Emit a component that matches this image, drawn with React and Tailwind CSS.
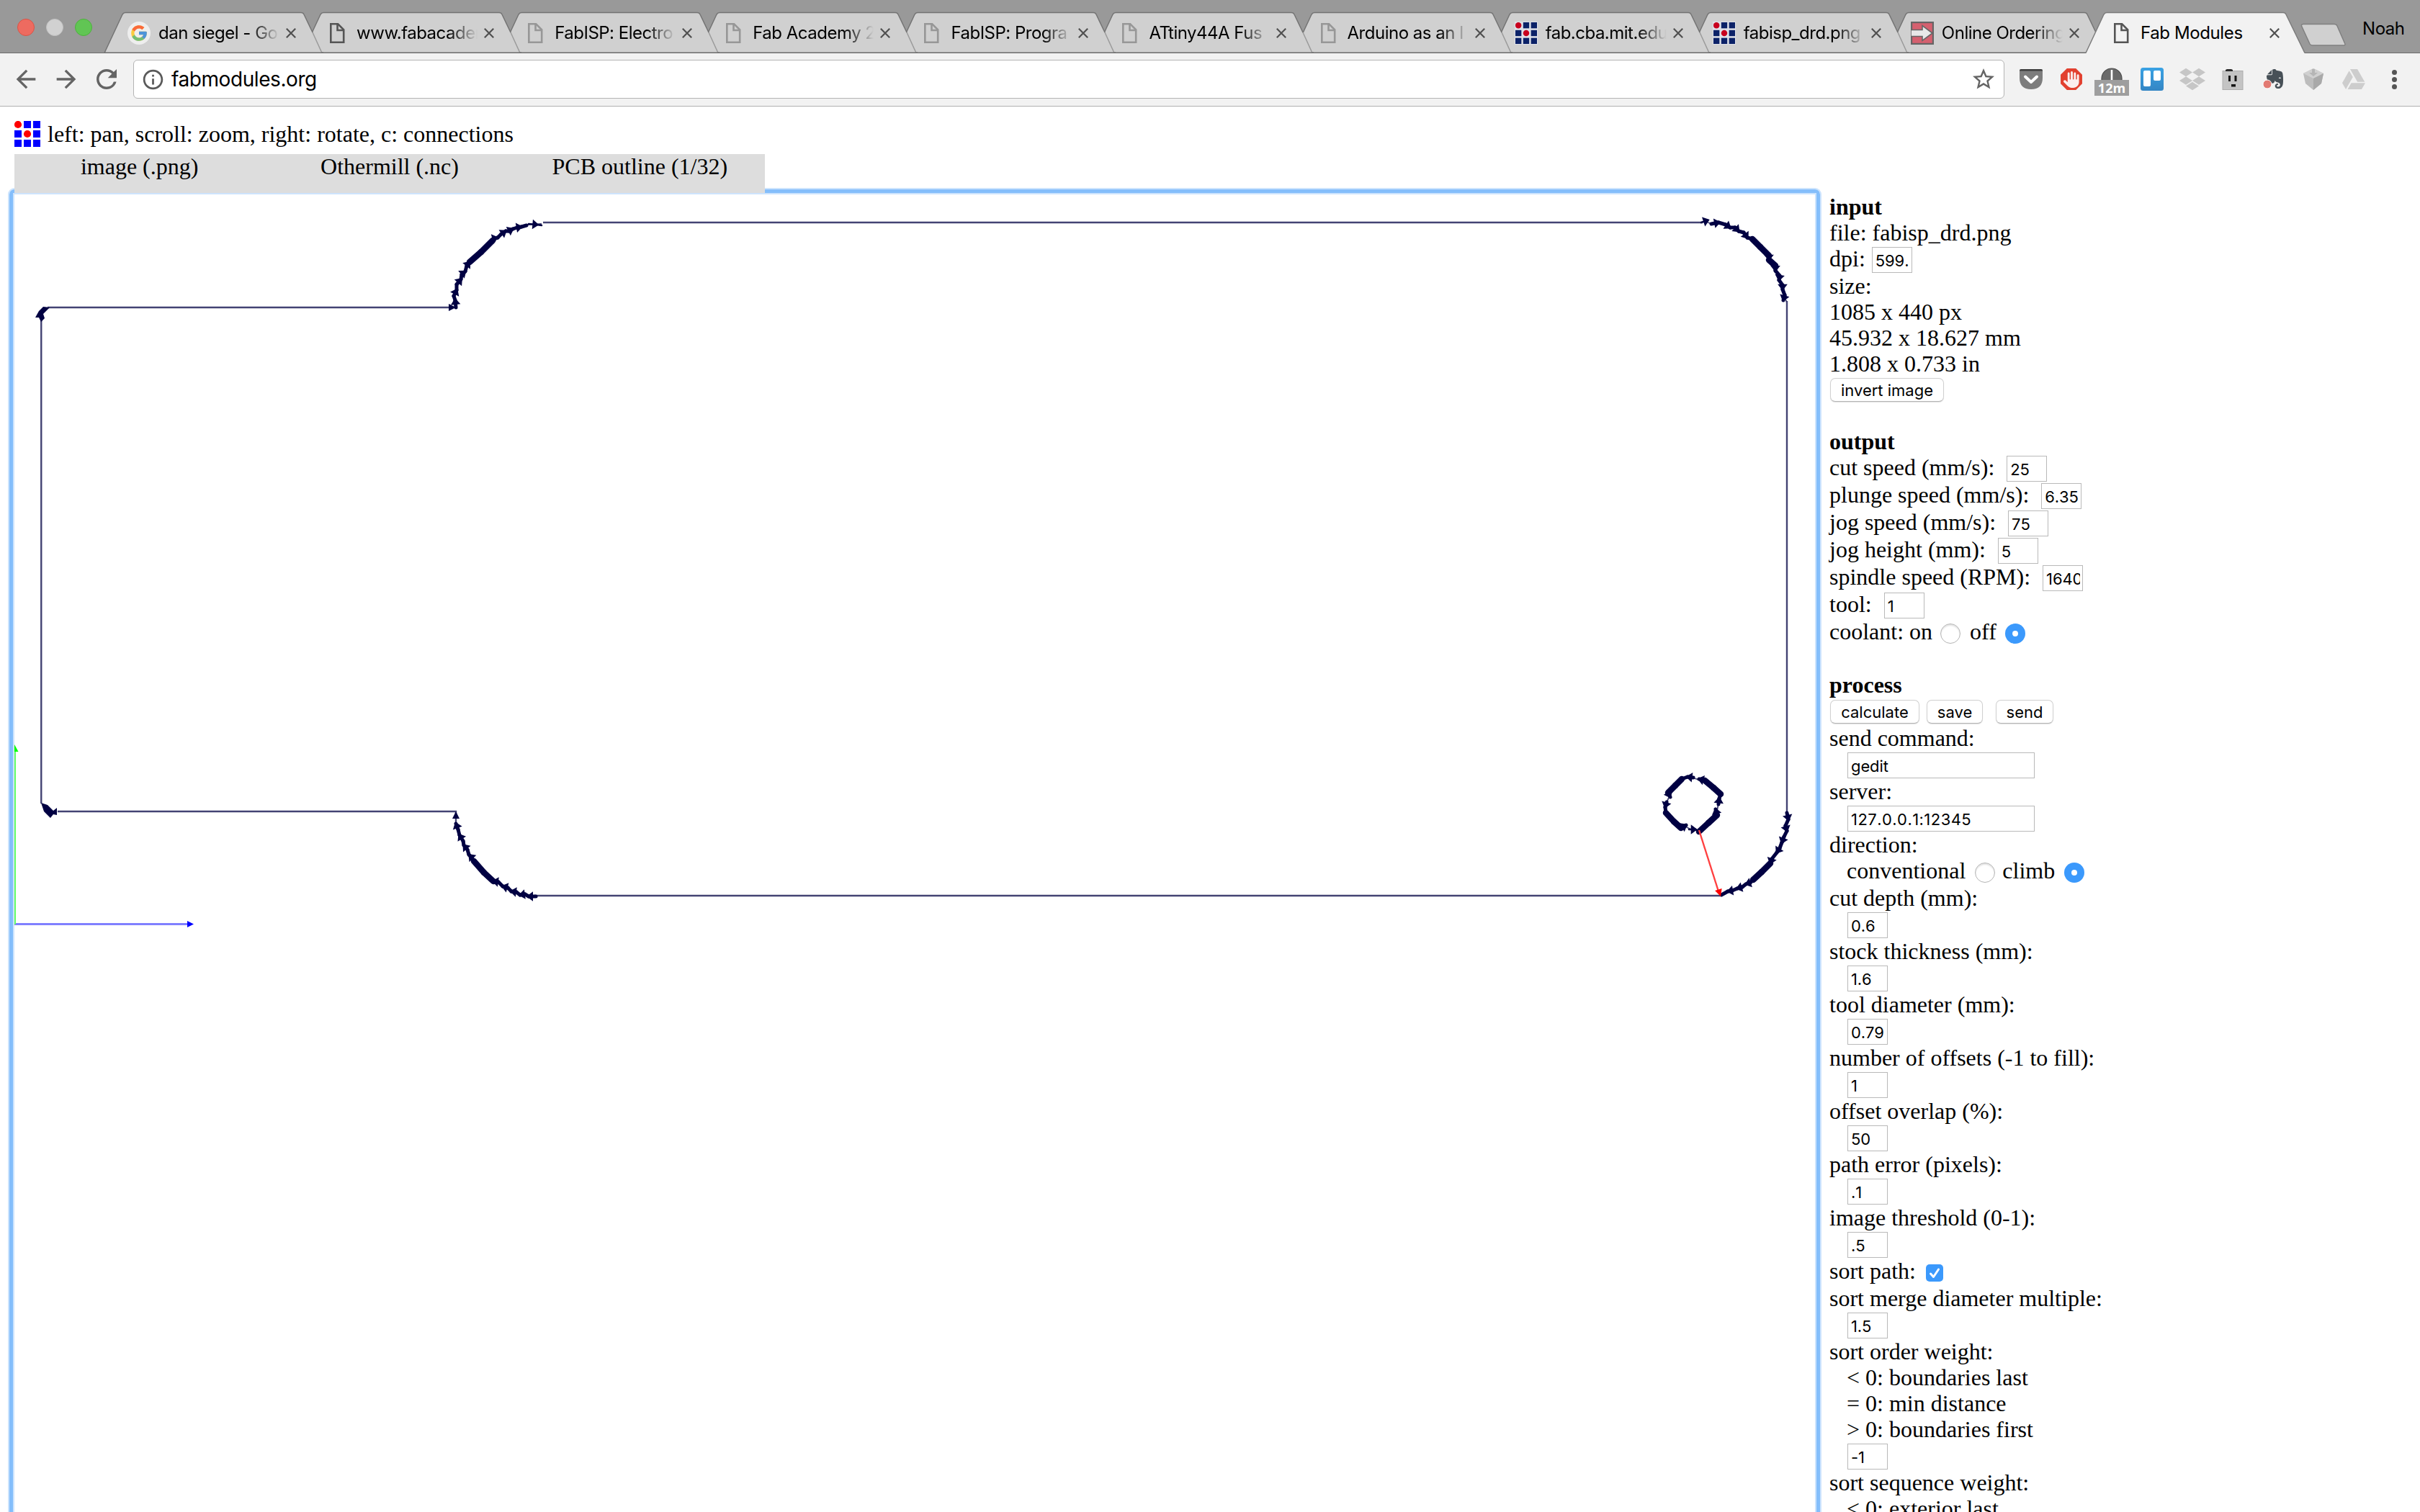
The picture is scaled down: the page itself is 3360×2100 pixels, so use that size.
import React from "react";
import { FcGoogle } from "react-icons/fc";
import { MdArrowBack, MdArrowForward, MdRefresh, MdInfoOutline, MdStarBorder } from "react-icons/md";
import { FaDropbox, FaEvernote, FaGoogleDrive, FaHand } from "react-icons/fa6";

const SANS = "font-['Inter','Liberation_Sans',sans-serif]";

/* ---------- favicons ---------- */

function DocIcon({ color }) {
  return (
    <svg className="h-8 w-8" viewBox="0 0 32 32" fill="none" stroke={color} strokeWidth="2.6">
      <path d="M7.3 3.3h9.9l8 8v17.4H7.3z" />
      <path d="M16.5 3.5v8.5h8.5" />
    </svg>
  );
}

function GridLogo({ className, blue, red }) {
  const cells = [0, 1, 2].flatMap((r) => [0, 1, 2].map((c) => [r, c]));
  return (
    <svg className={className} viewBox="0 0 36 36">
      {cells.map(([r, c]) =>
        r === c && r < 2 ? (
          <circle key={`${r}${c}`} cx={5 + c * 13} cy={5 + r * 13} r="5.1" fill={red} />
        ) : (
          <rect key={`${r}${c}`} x={c * 13} y={r * 13} width="10" height="10" fill={blue} />
        )
      )}
    </svg>
  );
}

function Favicon({ kind }) {
  if (kind === "google")
    return (
      <span className="flex h-8 w-8 items-center justify-center rounded-full bg-[#eeeeee]">
        <FcGoogle size={26} opacity="0.75" />
      </span>
    );
  if (kind === "grid")
    return (
      <span className="flex h-8 w-8 items-center justify-center bg-[#dfe1e8]">
        <GridLogo className="h-[30px] w-[30px]" blue="#0c2268" red="#c8001e" />
      </span>
    );
  if (kind === "arrow")
    return (
      <svg className="h-8 w-8" viewBox="0 0 32 32">
        <rect x="1" y="1" width="30" height="30" fill="#d5606f" stroke="#666" strokeWidth="2.4" />
        <path d="M0 11.500h16V5.500L30 16 16 26.500v-6H0z" fill="#e8e8e8" stroke="#666" strokeWidth="1.600" />
      </svg>
    );
  return <DocIcon color={kind === "dark" ? "#555555" : "#979797"} />;
}

/* ---------- tab strip ---------- */

const TABS = [
  { title: "dan siegel - Go", icon: "google", z: "z-[11]" },
  { title: "www.fabacadem", icon: "dark", z: "z-[10]" },
  { title: "FabISP: Electro", icon: "light", z: "z-[9]" },
  { title: "Fab Academy 2", icon: "light", z: "z-[8]" },
  { title: "FabISP: Progra", icon: "light", z: "z-[7]" },
  { title: "ATtiny44A Fus", icon: "light", z: "z-[6]" },
  { title: "Arduino as an I", icon: "light", z: "z-[5]" },
  { title: "fab.cba.mit.edu", icon: "grid", z: "z-[4]" },
  { title: "fabisp_drd.png", icon: "grid", z: "z-[3]" },
  { title: "Online Ordering", icon: "arrow", z: "z-[2]" },
  { title: "Fab Modules", icon: "dark", z: "z-[20]", active: true },
];

function Tab({ tab }) {
  return (
    <div className={`relative h-[74px] w-[275.1px] shrink-0 ${tab.z}`}>
      <svg className="absolute left-0 top-[17px] h-[57px] w-[304px] overflow-visible" viewBox="0 0 304 57">
        {tab.active ? (
          <>
            <path d="M0 57L25 3Q26.500 .5 29 .5H274Q277 .5 278 3L304 57z" fill="#f2f2f2" />
            <path d="M0 56.500L25 3Q26.500 .5 29 .5H274Q277 .5 278 3L304 56.500" fill="none" stroke="#7c7c7c" strokeWidth="1.5" />
          </>
        ) : (
          <>
            <path d="M0 57L25 3Q26.500 .5 29 .5H273Q276 .5 277 3L302 57z" fill="#d0d0d0" />
            <path d="M0 56.500L25 3Q26.500 .5 29 .5H273Q276 .5 277 3L289 28" fill="none" stroke="#747474" strokeWidth="1.5" />
            <path d="M289 28L302 56.500" fill="none" stroke="#9a9a9a" strokeWidth="1.5" />
            <path d="M0 56.250H304" stroke="#6c6c6c" strokeWidth="1.5" />
          </>
        )}
      </svg>
      <div className={`relative mt-[30px] flex h-8 items-center ${tab.active ? "pl-[33px]" : "pl-8"}`}>
        <Favicon kind={tab.icon} />
        <span
          className={`ml-[11px] w-[168px] overflow-hidden whitespace-nowrap text-2xl leading-8 text-black ${
            tab.active ? "tracking-[-0.38px]" : "tracking-[-0.5px] [mask-image:linear-gradient(to_right,black_76%,transparent)]"
          }`}
        >
          {tab.title}
        </span>
        <svg
          className={`h-[14px] w-[14px] shrink-0 ${tab.active ? "ml-[11px]" : "ml-[9px]"}`}
          viewBox="0 0 14 14"
          stroke="#505050"
          strokeWidth="2.2"
        >
          <path d="M.8.8l12.400 12.400M13.200.8L.8 13.200" />
        </svg>
      </div>
    </div>
  );
}

function TabStrip() {
  return (
    <div className="relative flex h-[74px] border-b border-[#6c6c6c] bg-[#999999]">
      <div className="flex w-[145px] shrink-0 items-center gap-4 pl-6 pt-[2px]">
        <span className="h-6 w-6 rounded-full border border-[#d95447] bg-[#ed6b60]" />
        <span className="h-6 w-6 rounded-full border border-[#c2c2c2] bg-[#d1d1d1]" />
        <span className="h-6 w-6 rounded-full border border-[#4db13d] bg-[#61c554]" />
      </div>
      {TABS.map((tab) => (
        <Tab key={tab.title} tab={tab} />
      ))}
      <svg className="ml-[20px] mt-8 h-8 w-[70px] shrink-0" viewBox="0 0 70 32">
        <path d="M7 1.500H50Q53 1.500 54 4L64.500 28Q66 31 63 31H20Q17 31 16 29L4.500 4Q4 1.500 7 1.500z" fill="#d0d0d0" stroke="#808080" strokeWidth="1.5" />
      </svg>
      <span className="ml-[19px] mt-[24px] text-2xl leading-8 tracking-[-0.45px] text-black">Noah</span>
    </div>
  );
}

/* ---------- toolbar ---------- */

function Toolbar() {
  return (
    <div className="flex h-[74px] items-center border-b border-[#b0b0b0] bg-[#f2f2f2]">
      <div className="flex w-[185px] shrink-0 items-center pl-4 text-[#646464]">
        <MdArrowBack size={40} />
        <MdArrowForward size={40} className="ml-4" />
        <MdRefresh size={42} className="ml-[15px]" />
      </div>
      <div className="flex h-[54px] w-[2598px] shrink-0 items-center rounded-md border border-[#b4b4b4] bg-white">
        <MdInfoOutline size={33} color="#5a5a5a" className="ml-[10px]" />
        <span className="ml-[9px] grow text-[28px] leading-9 tracking-[-0.43px] text-black">fabmodules.org</span>
        <MdStarBorder size={36} color="#646464" className="mr-[10px]" />
      </div>
      <svg className="ml-[20px] h-8 w-[34px] shrink-0" viewBox="0 0 34 32">
        <path d="M1 4Q1 2 3 2H31Q33 2 33 4V14Q33 30 17 30T1 14z" fill="#7d7d7d" />
        <path d="M1 4.500Q1 2 3 2H31Q33 2 33 4.500z" fill="#3e3e3e" />
        <path d="M9 12.500l8 7.500 8-7.500" fill="none" stroke="#fff" strokeWidth="4" strokeLinecap="round" strokeLinejoin="round" />
      </svg>
      <span className="relative ml-[23px] flex h-8 w-8 shrink-0 items-center justify-center">
        <svg className="absolute inset-0 h-full w-full" viewBox="0 0 31 31">
          <path d="M9.500 1h12l8.500 8.500v12L21.500 30h-12L1 21.500v-12z" fill="#e2402f" />
        </svg>
        <FaHand size={23} color="#fbeeee" className="relative" />
      </span>
      <span className="relative ml-4 mt-2 h-[40px] w-12 shrink-0">
        <svg className="absolute left-[9px] top-0 h-[18px] w-[30px]" viewBox="0 0 30 18">
          <path d="M1 18V15a14 14 0 0 1 28 0v3z" fill="#6a6a6a" stroke="#4c4c4c" strokeWidth="1.2" />
          <path d="M15 3v15" stroke="#fff" strokeWidth="2.6" />
        </svg>
        <span className="absolute left-0 top-[17px] h-[22px] w-12 bg-[#9e9e9e] text-center font-['Open_Sans',sans-serif] text-[18px] font-bold leading-[23px] text-white">
          12m
        </span>
      </span>
      <svg className="ml-4 h-8 w-8 shrink-0" viewBox="0 0 32 32">
        <defs>
          <linearGradient id="trello" x1="0" y1="0" x2="0" y2="1">
            <stop offset="0" stopColor="#3aa2e4" />
            <stop offset="1" stopColor="#3486c4" />
          </linearGradient>
        </defs>
        <rect width="32" height="32" rx="3.5" fill="url(#trello)" />
        <rect x="4" y="4" width="10" height="22" rx="2" fill="#fff" />
        <rect x="18" y="4" width="10" height="14" rx="2" fill="#fff" />
      </svg>
      <FaDropbox size={36} color="#c6c6c6" className="ml-[22px] shrink-0" />
      <svg className="ml-[22px] h-[30px] w-[32px] shrink-0" viewBox="0 0 32 30">
        <rect x="2" y="3.500" width="28" height="26" fill="#c4c4c4" stroke="#adadad" />
        <path d="M6 4V2l2-1h6l2 1v2z" fill="#2b2b2b" />
        <path d="M10 10h3v8h-3zM18.500 10h3v8h-3zM14 22h6v3.500h-6z" fill="#151515" />
      </svg>
      <span className="relative ml-[25px] h-8 w-8 shrink-0">
        <FaEvernote size={31} color="#475057" className="absolute left-[2px] top-0" />
        <svg className="absolute left-0 top-[16px] h-[14px] w-[14px]" viewBox="0 0 14 14">
          <circle cx="7" cy="7" r="6" fill="#e27a72" stroke="#fff" />
        </svg>
      </span>
      <svg className="ml-[24px] h-8 w-[30px] shrink-0" viewBox="0 0 30 32">
        <path d="M15 1L29 8 26 22 15 31 4 22 1 8z" fill="#bdbdbd" />
        <path d="M15 1L29 8 15 15 1 8z" fill="#d0d0d0" />
        <path d="M15 15L29 8 26 22 15 31z" fill="#a9a9a9" />
        <path d="M13 2h4v5h4l-6 5-6-5h4z" fill="#b5b5b5" />
      </svg>
      <FaGoogleDrive size={32} color="#cdcdcd" className="ml-[25px] shrink-0" />
      <div className="ml-[37px] flex flex-col gap-[3px]">
        <span className="h-[7px] w-[7px] rounded-full bg-[#555]" />
        <span className="h-[7px] w-[7px] rounded-full bg-[#555]" />
        <span className="h-[7px] w-[7px] rounded-full bg-[#555]" />
      </div>
    </div>
  );
}

/* ---------- tool path drawing ---------- */

const NAVY = "#000042";

/* Each run lists its vertices in the cutting direction. */
const RUNS = [
  // upper left arc
  [[633, 427], [632, 417], [630, 411], [634, 403], [634, 395], [640, 388], [641, 381], [646, 377], [648, 369], [652, 364], [668, 350], [684, 334], [687, 331], [691, 330], [696, 325], [702, 321], [706, 321], [712, 318], [718, 316], [724, 315], [731, 313]],
  [[734, 311], [745, 312], [752, 313]],
  // upper right arc
  [[2362, 309], [2371, 306]],
  [[2376, 311], [2386, 309], [2396, 312], [2402, 316], [2409, 316], [2414, 321], [2421, 323], [2426, 330], [2433, 332], [2444, 343], [2456, 355], [2456, 361], [2465, 369], [2465, 376], [2471, 383], [2470, 389], [2475, 396], [2475, 402], [2478, 410], [2476, 417]],
  // lower right arc
  [[2481, 1129], [2483, 1138], [2479, 1147], [2481, 1154], [2477, 1162], [2474, 1170], [2471, 1178], [2467, 1184], [2460, 1193], [2458, 1199], [2446, 1211], [2434, 1222], [2430, 1226], [2424, 1228], [2419, 1232], [2412, 1234], [2405, 1237], [2399, 1238], [2390, 1243]],
  // lower left arc
  [[744, 1245], [734, 1245], [729, 1242], [722, 1243], [717, 1239], [710, 1238], [705, 1233], [698, 1231], [692, 1225], [685, 1224], [672, 1212], [658, 1196], [654, 1190], [651, 1187], [649, 1180], [644, 1174], [643, 1168], [638, 1160], [636, 1152], [633, 1144]],
  // hole
  [[2359, 1155], [2372, 1143], [2384, 1132], [2382, 1124]],
  [[2386, 1117], [2387, 1109], [2389, 1103], [2379, 1094], [2367, 1084], [2359, 1082]],
  [[2351, 1080], [2343, 1079], [2335, 1082], [2326, 1091], [2316, 1101], [2319, 1107]],
  [[2314, 1114], [2312, 1121], [2313, 1129], [2324, 1141], [2334, 1150], [2341, 1146]],
  [[2345, 1152], [2354, 1152], [2360, 1156]],
];

const EDGES = [
  "M66 427H627",
  "M754 309H2364",
  "M2481 418V1130",
  "M2388 1244H742",
  "M633 1146V1127H80",
  "M57.250 1116V440",
];

function Arrow({ from, to, color = NAVY, size = 9, half = size / 2 }) {
  const angle = (Math.atan2(to[1] - from[1], to[0] - from[0]) * 180) / Math.PI;
  return (
    <path
      d={`M0 0L${-size} ${-half}V${half}z`}
      fill={color}
      transform={`translate(${to[0]} ${to[1]}) rotate(${angle.toFixed(1)})`}
    />
  );
}

/* Diagonal stretches are dense enough to fill in; shallower ones show single arrow heads. */
function Run({ points }) {
  return (
    <g>
      {points.slice(1).map((p, k) => {
        const q = points[k];
        const dense = Math.hypot(p[0] - q[0], p[1] - q[1]) > 11.8;
        return (
          <g key={k}>
            <path
              d={`M${q[0]} ${q[1]}L${p[0]} ${p[1]}`}
              stroke={NAVY}
              strokeWidth={dense ? 8.5 : points.length > 3 ? 5 : 2.5}
              strokeLinecap="round"
            />
            {!dense && k % 2 === 0 && (
              <Arrow from={q} to={[p[0] + (p[0] - q[0]) * 0.3, p[1] + (p[1] - q[1]) * 0.3]} size={9} half={6.8} />
            )}
          </g>
        );
      })}
    </g>
  );
}

function ToolPath() {
  return (
    <svg className="block h-[1830px] w-[2500px]" viewBox="20 270 2500 1830">
      <g fill="none" stroke="#434373" strokeWidth="2.4">
        {EDGES.map((d) => (
          <path key={d} d={d} />
        ))}
        <path d="M731 312L752 311M2371 309L2378 311M2477 412L2481 420M2384 1126L2386 1116M2359 1083L2349 1080M2318 1106L2313 1116M2340 1148L2348 1152" strokeWidth="1.8" />
      </g>
      {RUNS.map((run, i) => (
        <Run key={i} points={run} />
      ))}
      <path d="M57 1115L66 1118 74 1126 79 1122V1132L74 1131 70 1136 61 1127z" fill={NAVY} />
      <path d="M57 447L54 441 49 441 54 432 60 426 69 427 60 436 62 442z" fill={NAVY} />
      <Arrow from={[600, 427]} to={[633, 427]} size={10} />
      <Arrow from={[633, 1180]} to={[633, 1127]} size={10} />
      <path d="M2359 1153L2386 1238" stroke="#ff4040" strokeWidth="2.4" />
      <Arrow from={[2359, 1153]} to={[2389, 1245]} color="#ff0000" size={10} />
      <path d="M20 1283.500H262" stroke="#8080ff" strokeWidth="3.2" />
      <Arrow from={[20, 1283.5]} to={[269, 1283.5]} color="#0000ff" />
      <path d="M21 1284V1042" stroke="#66ff66" strokeWidth="2" />
      <path d="M20 1034l5.500 10H20z" fill="#00ff00" />
    </svg>
  );
}

/* ---------- settings column ---------- */

function Box({ value, wide }) {
  return (
    <span
      className={`mt-[2px] block h-9 shrink-0 border border-[#b9b9b9] bg-white pl-1 pr-[3px] ${SANS} text-[22px] text-black [font-kerning:none] ${
        wide ? "w-[260px]" : "w-14"
      } ${value.length > 8 ? "tracking-[0.45px]" : "tracking-[-0.1px]"}`}
    >
      <span className="block overflow-hidden whitespace-nowrap leading-[36px]">{value}</span>
    </span>
  );
}

function Button({ children, className }) {
  return (
    <span
      className={`block h-[33px] shrink-0 rounded-[7px] border border-[#d0d0d0] border-b-[#b4b4b4] bg-white text-center ${SANS} text-[22px] leading-[33px] text-black shadow-[0_1px_1px_rgba(0,0,0,0.12)] ${className}`}
    >
      {children}
    </span>
  );
}

function Radio({ on, className }) {
  return (
    <span
      className={`mt-[7px] flex h-7 w-7 shrink-0 items-center justify-center rounded-full ${
        on ? "bg-[#3b99fc]" : "border border-[#b5b5b5] bg-white shadow-[inset_0_2px_2px_rgba(0,0,0,0.12)]"
      } ${className}`}
    >
      {on && <span className="h-2 w-2 rounded-full bg-white" />}
    </span>
  );
}

function Line({ children, bold }) {
  return <div className={`h-9 whitespace-pre ${bold ? "font-bold" : ""}`}>{children}</div>;
}

function Row({ children }) {
  return <div className="flex h-[38px] whitespace-pre">{children}</div>;
}

function Field({ label, value, wide }) {
  return (
    <>
      <Line>{label}</Line>
      <div className="flex h-[38px] pl-[25px]">
        <Box value={value} wide={wide} />
      </div>
    </>
  );
}

function Settings() {
  return (
    <div className="ml-[11px] mt-2 w-[800px] text-[32px] leading-9 text-black">
      <Line bold>input</Line>
      <Line>file: fabisp_drd.png</Line>
      <Row>
        <span className="mr-[1px]">{"dpi: "}</span>
        <Box value="599." />
      </Row>
      <Line>size:</Line>
      <Line>1085 x 440 px</Line>
      <Line>45.932 x 18.627 mm</Line>
      <Line>1.808 x 0.733 in</Line>
      <div className="flex h-9 pl-[1px] pt-[2px]">
        <Button className="w-[158px]">invert image</Button>
      </div>
      <Line> </Line>

      <Line bold>output</Line>
      {[
        ["cut speed (mm/s):  ", "25"],
        ["plunge speed (mm/s):  ", "6.35"],
        ["jog speed (mm/s):  ", "75"],
        ["jog height (mm):  ", "5"],
        ["spindle speed (RPM):  ", "1640"],
        ["tool:  ", "1"],
      ].map(([label, value]) => (
        <Row key={label}>
          <span className="mr-[1px]">{label}</span>
          <Box value={value} />
        </Row>
      ))}
      <Row>
        <span>coolant: on</span>
        <Radio className="ml-[11px]" />
        <span className="ml-[13px]">off</span>
        <Radio on className="ml-3" />
      </Row>
      <Line> </Line>

      <Line bold>process</Line>
      <div className="flex h-[38px] pl-[1px] pt-[3px]">
        <Button className="w-[124px]">calculate</Button>
        <Button className="ml-[10px] w-[78px]">save</Button>
        <Button className="ml-[18px] w-[80px]">send</Button>
      </div>
      <Field label="send command:" value="gedit" wide />
      <Field label="server:" value="127.0.0.1:12345" wide />
      <Line>direction:</Line>
      <Row>
        <span>{"   conventional"}</span>
        <Radio className="ml-[13px]" />
        <span className="ml-[10px]">climb</span>
        <Radio on className="ml-[13px]" />
      </Row>
      <Field label="cut depth (mm):" value="0.6" />
      <Field label="stock thickness (mm):" value="1.6" />
      <Field label="tool diameter (mm):" value="0.79" />
      <Field label="number of offsets (-1 to fill):" value="1" />
      <Field label="offset overlap (%):" value="50" />
      <Field label="path error (pixels):" value=".1" />
      <Field label="image threshold (0-1):" value=".5" />
      <Row>
        <span>sort path:</span>
        <span className="ml-[14px] mt-[9px] flex h-6 w-6 items-center justify-center rounded-[5px] bg-[#3b99fc]">
          <svg className="h-6 w-6" viewBox="0 0 24 24" fill="none" stroke="#fff" strokeWidth="3" strokeLinecap="round" strokeLinejoin="round">
            <path d="M6.500 13l4 4.500L17.500 7" />
          </svg>
        </span>
      </Row>
      <Field label="sort merge diameter multiple:" value="1.5" />
      <Line>sort order weight:</Line>
      <Line>{"   < 0: boundaries last"}</Line>
      <Line>{"   = 0: min distance"}</Line>
      <Field label={"   > 0: boundaries first"} value="-1" />
      <Line>sort sequence weight:</Line>
      <Line>{"   < 0: exterior last"}</Line>
    </div>
  );
}

/* ---------- page ---------- */

function FabPage() {
  return (
    <div className="grow overflow-hidden bg-white font-['Liberation_Serif',serif] text-[32px] text-black">
      <div className="flex h-[66px] items-end pb-[10px] pl-5">
        <GridLogo className="h-9 w-9" blue="#0000ff" red="#ff0000" />
        <span className="ml-[10px] leading-9">left: pan, scroll: zoom, right: rotate, c: connections</span>
      </div>
      <div className="relative z-10 -mb-[7px] ml-5 grid h-[54px] w-[1042px] grid-cols-3 bg-[#dddddd] text-center leading-[34px]">
        <span>image (.png)</span>
        <span>Othermill (.nc)</span>
        <span>PCB outline (1/32)</span>
      </div>
      <div className="flex pl-[11px]">
        <div className="h-[1850px] shrink-0 rounded-[9px] border-2 border-b-0 border-[#cde4fd]">
          <div className="h-full rounded-[7px] border-[5px] border-b-0 border-[#84befb]">
            <div className="h-full border-2 border-b-0 border-[#cde4fd]">
              <ToolPath />
            </div>
          </div>
        </div>
        <Settings />
      </div>
    </div>
  );
}

export default function App() {
  return (
    <div className={`flex h-[2100px] w-[3360px] flex-col overflow-hidden bg-white ${SANS}`}>
      <TabStrip />
      <Toolbar />
      <FabPage />
    </div>
  );
}
